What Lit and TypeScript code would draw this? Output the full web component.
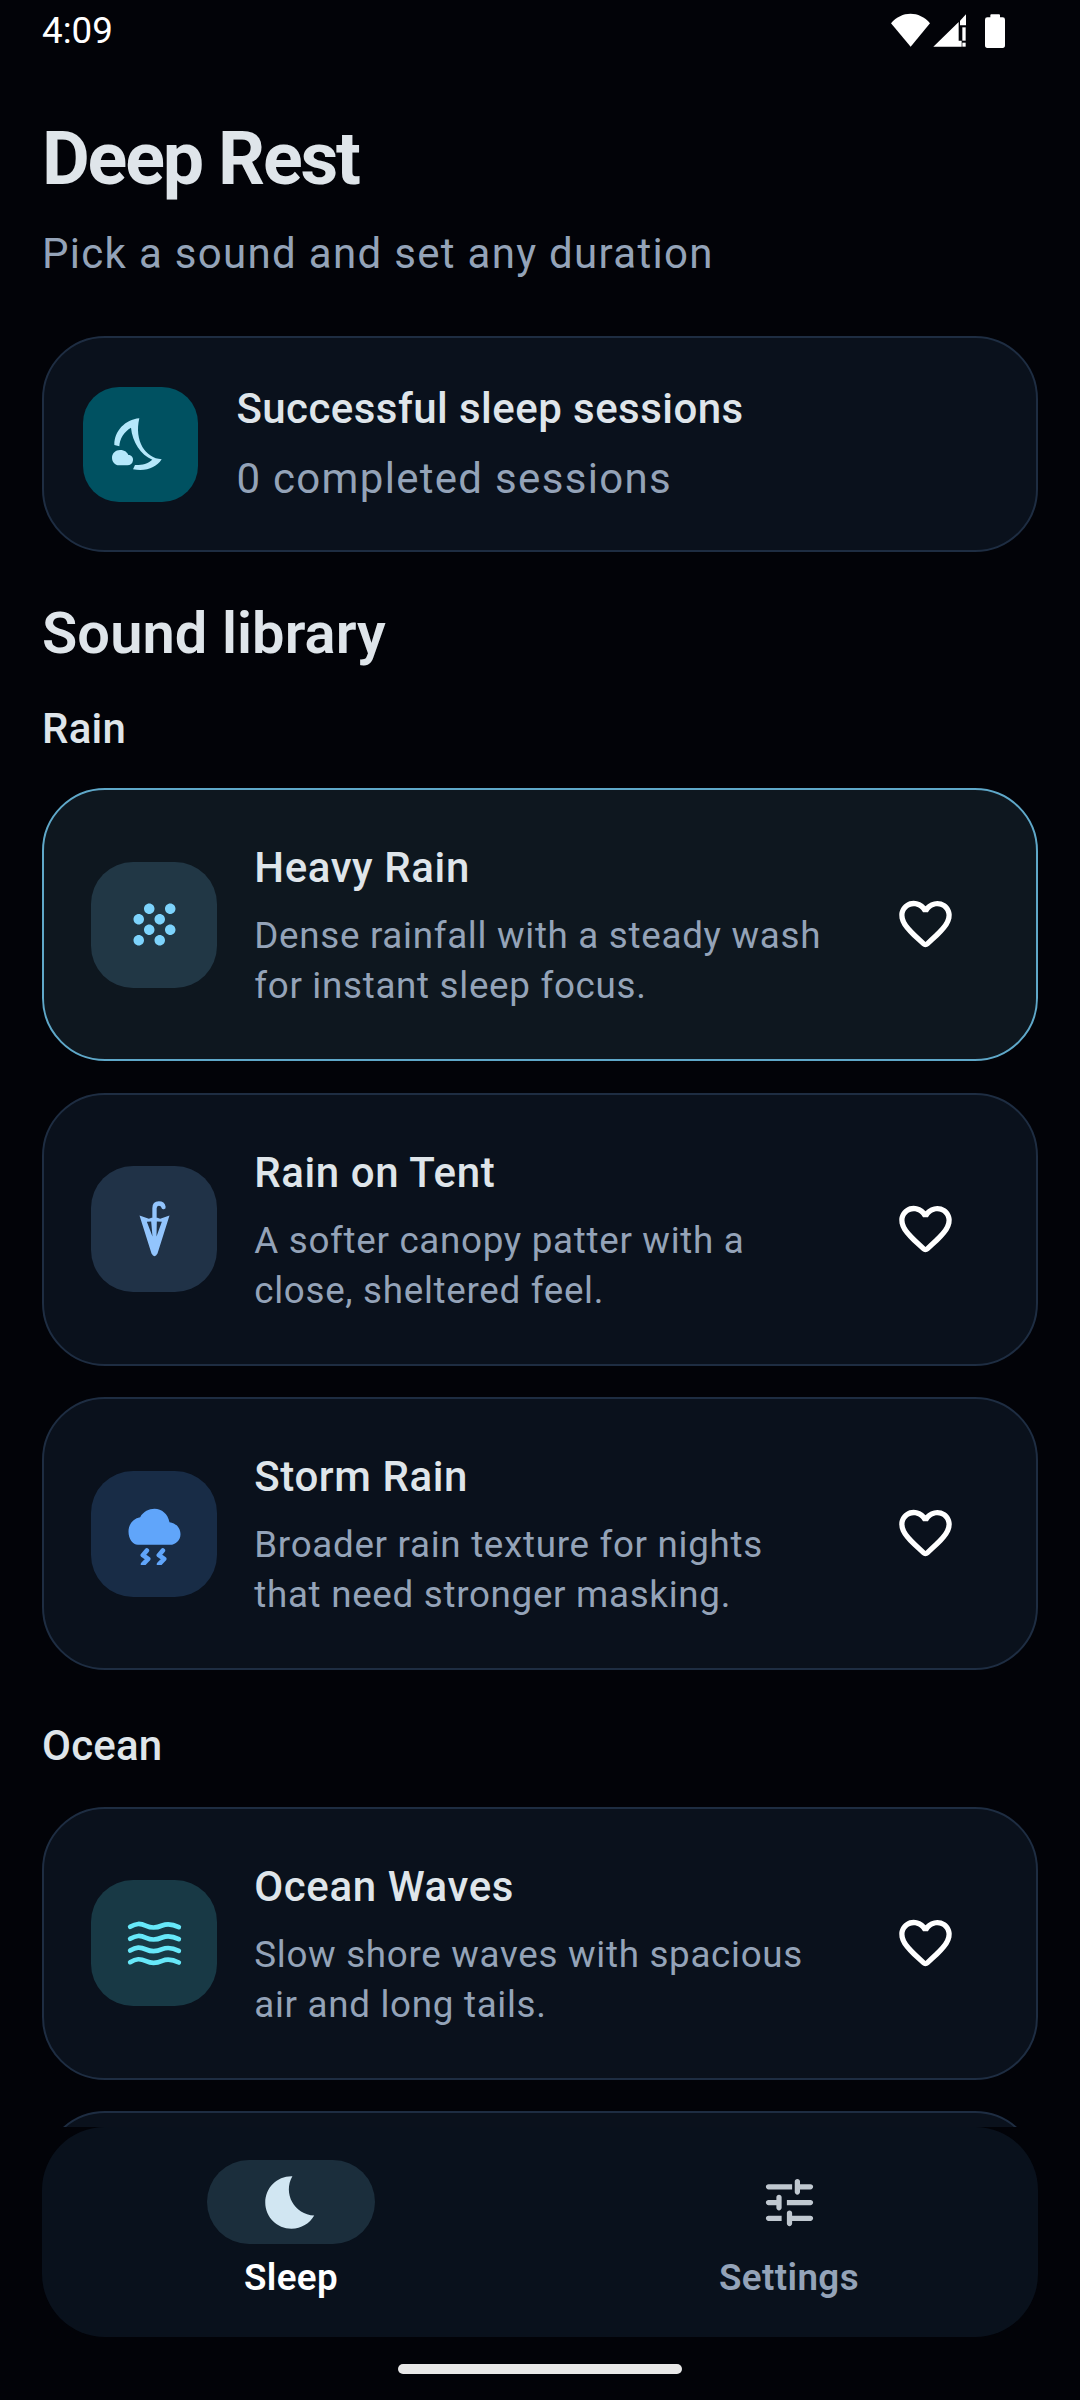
import { LitElement, html, css, svg } from "lit";
import { customElement } from "lit/decorators.js";

const grain = svg`<svg viewBox="0 0 24 24" fill="currentColor"><path d="M10 12c-1.1 0-2 .9-2 2s.9 2 2 2 2-.9 2-2-.9-2-2-2zM6 8c-1.1 0-2 .9-2 2s.9 2 2 2 2-.9 2-2-.9-2-2-2zm0 8c-1.1 0-2 .9-2 2s.9 2 2 2 2-.9 2-2-.9-2-2-2zm12-8c1.1 0 2-.9 2-2s-.9-2-2-2-2 .9-2 2 .9 2 2 2zm-4 8c-1.1 0-2 .9-2 2s.9 2 2 2 2-.9 2-2-.9-2-2-2zm4-4c-1.1 0-2 .9-2 2s.9 2 2 2 2-.9 2-2-.9-2-2-2zm-4-4c-1.1 0-2 .9-2 2s.9 2 2 2 2-.9 2-2-.9-2-2-2zm-4-4c-1.1 0-2 .9-2 2s.9 2 2 2 2-.9 2-2-.9-2-2-2z"/></svg>`;
const umbrella = svg`<svg viewBox="160.5 169.5 189 189"><path fill="currentColor" fill-rule="evenodd" d="M210 222L238 232Q255 224 272 232L300 222L264 336Q255 352 246 336ZM232 241L245 240L249 285ZM262 240L277 241L261 285Z"/><path fill="none" stroke="currentColor" stroke-width="13" stroke-linecap="round" d="M255 228V200Q255 186 268 186Q280 186 282 197"/></svg>`;
const storm = svg`<svg viewBox="160.5 151.5 189 189"><path fill="currentColor" d="M205 280C190 280 177 262 177 240C177 218 192 200 212 197C222 180 238 172 255 172C277 172 295 188 300 212C318 214 333 228 333 248C333 266 318 280 302 280Z"/><path fill="none" stroke="currentColor" stroke-width="14" stroke-linecap="round" stroke-linejoin="round" d="M232 297L220 311L236 322L221 338M280 297L268 311L284 322L269 338"/></svg>`;
const waves = svg`<svg viewBox="160.5 154.5 189 189"><g fill="none" stroke="currentColor" stroke-width="14" stroke-linecap="round"><path d="M182 199C200 188 212 188 230 196C245 203 260 203 278 195C295 188 308 190 328 200"/><path d="M182 235C200 224 212 224 230 232C245 239 260 239 278 231C295 224 308 226 328 236"/><path d="M182 270C200 259 212 259 230 267C245 274 260 274 278 266C295 259 308 261 328 271"/><path d="M182 305C200 294 212 294 230 302C245 309 260 309 278 301C295 294 308 296 328 306"/></g></svg>`;
const nightStay = svg`<svg viewBox="150 156 189 189" fill="currentColor"><path d="M241 172C198 176 166 210 166 252L181 256C182 232 196 212 216 200C220 242 245 282 280 296C266 309 245 313 228 312L222 325C262 332 292 320 308 295C260 292 225 240 241 172Z"/><path d="M183 267C198 267 205 275 208 282C218 282 223 290 222 298C221 308 214 313 205 313H180C168 313 159 302 159 290C159 277 170 267 183 267Z"/></svg>`;
const heart = svg`<svg viewBox="0 0 24 24" fill="currentColor"><path d="M19.66 3.99c-2.64-1.8-5.9-.96-7.66 1.1-1.76-2.06-5.02-2.91-7.66-1.1-1.4.96-2.28 2.58-2.34 4.29-.14 3.88 3.3 6.99 8.55 11.76l.1.09c.76.69 1.93.69 2.69-.01l.11-.1c5.25-4.76 8.68-7.87 8.55-11.75-.06-1.7-.94-3.32-2.34-4.28zM12.1 18.55l-.1.1-.1-.1C7.14 14.24 4 11.39 4 8.5 4 6.5 5.5 5 7.5 5c1.54 0 3.04.99 3.57 2.36h1.87C13.46 5.99 14.96 5 16.5 5c2 0 3.5 1.5 3.5 3.5 0 2.89-3.14 5.74-7.9 10.05z"/></svg>`;
const bedtime = svg`<svg viewBox="0 0 24 24" fill="currentColor"><path d="M12.34 2.02C6.59 1.82 2 6.42 2 12c0 5.52 4.48 10 10 10 3.71 0 6.93-2.02 8.66-5.02-7.51-.25-12.09-8.43-8.32-14.96z"/></svg>`;
const tune = svg`<svg viewBox="0 0 24 24" fill="currentColor"><path d="M3 18c0 .55.45 1 1 1h5v-2H4c-.55 0-1 .45-1 1zM3 6c0 .55.45 1 1 1h9V5H4c-.55 0-1 .45-1 1zm10 14v-1h7c.55 0 1-.45 1-1s-.45-1-1-1h-7v-1c0-.55-.45-1-1-1s-1 .45-1 1v4c0 .55.45 1 1 1s1-.45 1-1zM7 10v1H4c-.55 0-1 .45-1 1s.45 1 1 1h3v1c0 .55.45 1 1 1s1-.45 1-1v-4c0-.55-.45-1-1-1s-1 .45-1 1zm14 2c0-.55-.45-1-1-1h-9v2h9c.55 0 1-.45 1-1zm-6-3c.55 0 1-.45 1-1V7h4c.55 0 1-.45 1-1s-.45-1-1-1h-4V4c0-.55-.45-1-1-1s-1 .45-1 1v4c0 .55.45 1 1 1z"/></svg>`;
const status = svg`<svg class="sys" viewBox="0 0 660 180" fill="#fff"><path d="M93 70C125 32 178 32 210 70L152 140Z"/><path d="M220 140L296 66V122H305V140Z"/><path d="M300 62L318 43V76H300Z"/><rect x="307" y="82" width="10" height="40"/><rect x="307" y="128" width="10" height="12"/><path d="M391 52V46Q391 43 394 43H417Q420 43 420 46V52H428Q435 52 435 59V136Q435 144 428 144H382Q375 144 375 136V59Q375 52 382 52Z"/></svg>`;

type Sound = { title: string; l1: string; l2: string; icon: unknown; tone: string; active?: boolean };
const rain: Sound[] = [
  { title: "Heavy Rain", l1: "Dense rainfall with a steady wash", l2: "for instant sleep focus.", icon: grain, tone: "t-heavy", active: true },
  { title: "Rain on Tent", l1: "A softer canopy patter with a", l2: "close, sheltered feel.", icon: umbrella, tone: "t-tent" },
  { title: "Storm Rain", l1: "Broader rain texture for nights", l2: "that need stronger masking.", icon: storm, tone: "t-storm" },
];
const ocean: Sound[] = [
  { title: "Ocean Waves", l1: "Slow shore waves with spacious", l2: "air and long tails.", icon: waves, tone: "t-ocean" },
];

@customElement("app-root")
export class AppRoot extends LitElement {
  static styles = css`
    :host {
      display: flex;
      flex-direction: column;
      width: 1080px;
      height: 2400px;
      background: #020308;
      font-family: Roboto, "Liberation Sans", sans-serif;
      overflow: hidden;
    }
    .status {
      flex: none;
      height: 60px;
      display: flex;
      justify-content: space-between;
      align-items: flex-start;
      padding-left: 42px;
      color: #fff;
      font-size: 36.75px;
      line-height: 62px;
    }
    .sys { width: 220px; height: 60px; display: block; }
    main {
      flex: 1;
      min-height: 0;
      overflow: hidden;
      padding: 0 42px;
      display: flex;
      flex-direction: column;
    }
    h1 {
      margin: 56px 0 0;
      font-size: 73.5px;
      line-height: 86px;
      font-weight: 700;
      letter-spacing: -2.15px;
      color: #dfe5ea;
    }
    .sub {
      margin: 26px 0 0;
      font-size: 42px;
      line-height: 52px;
      letter-spacing: 1.31px;
      color: #94a3b8;
    }
    .summary {
      margin-top: 56px;
      box-sizing: border-box;
      height: 216px;
      flex: none;
      border: 2.6px solid #1e2d42;
      border-radius: 63px;
      background: #0a111c;
      padding: 0 39.4px;
      display: flex;
      align-items: center;
      gap: 38px;
    }
    .summary .box {
      width: 115px;
      height: 115px;
      border-radius: 36px;
      background: #005161;
      color: #b5e8fb;
    }
    .s-title {
      font-size: 42px;
      line-height: 52px;
      font-weight: 500;
      letter-spacing: 0.45px;
      color: #dfe5ea;
    }
    .s-sub {
      margin-top: 18px;
      font-size: 42px;
      line-height: 52px;
      letter-spacing: 1.31px;
      color: #94a3b8;
    }
    h2 {
      margin: 45px 0 0;
      font-size: 57.75px;
      line-height: 72px;
      font-weight: 600;
      letter-spacing: 0.1px;
      color: #dfe5ea;
    }
    h3 {
      margin: 0;
      font-size: 42px;
      line-height: 52px;
      font-weight: 500;
      letter-spacing: 0.2px;
      color: #dfe5ea;
    }
    h3.rain { margin-top: 33.5px; }
    h3.ocean { margin-top: 49.5px; }
    .list {
      display: flex;
      flex-direction: column;
      gap: 31.5px;
      margin-top: 33.5px;
      flex: none;
    }
    .ocean + .list { margin-top: 35px; }
    .card {
      box-sizing: border-box;
      height: 273px;
      flex: none;
      border: 2.6px solid #1e2d42;
      border-radius: 63px;
      background: #0a111c;
      padding: 0 47.25px;
      display: flex;
      align-items: center;
      gap: 37px;
    }
    .card.active { background: #0e171f; border-color: #5fa8c9; }
    .box {
      width: 126px;
      height: 126px;
      border-radius: 42px;
      flex: none;
      display: flex;
      align-items: center;
      justify-content: center;
    }
    .box svg { width: 63px; height: 63px; display: block; }
    .t-heavy { background: #213745; color: #7dd3fc; }
    .t-tent { background: #203247; color: #93c5fd; }
    .t-storm { background: #182c46; color: #60a5fa; }
    .t-ocean { background: #183945; color: #67e8f9; }
    .text { flex: 1; min-width: 0; padding-top: 4px; }
    .name {
      font-size: 42px;
      line-height: 52px;
      font-weight: 500;
      letter-spacing: 0.6px;
      color: #dfe5ea;
    }
    .desc {
      margin-top: 17px;
      font-size: 36.75px;
      line-height: 50px;
      letter-spacing: 0.7px;
      color: #94a3b8;
    }
    .fav {
      width: 126px;
      height: 126px;
      flex: none;
      color: #fff;
      display: flex;
      align-items: center;
      justify-content: center;
    }
    .fav svg { width: 63px; height: 63px; display: block; }
    nav {
      flex: none;
      height: 210px;
      margin: 0 42px;
      border-radius: 63px;
      background: #09111c;
      display: grid;
      grid-template-columns: 1fr 1fr;
    }
    .tab {
      display: flex;
      flex-direction: column;
      align-items: center;
      padding-top: 33px;
    }
    .pill {
      width: 168px;
      height: 84px;
      border-radius: 42px;
      display: flex;
      align-items: center;
      justify-content: center;
    }
    .tab.on .pill { background: #1b2e3c; color: #d1e6f2; }
    .tab.off .pill { color: #c0c8d0; }
    .pill svg { width: 63px; height: 63px; display: block; }
    .lbl {
      margin-top: 11px;
      font-size: 36.75px;
      line-height: 46px;
      font-weight: 600;
      letter-spacing: 0.4px;
    }
    .tab.on .lbl { color: #fff; }
    .tab.off .lbl { color: #94a3b8; }
    .home {
      flex: none;
      height: 63px;
      display: flex;
      justify-content: center;
      padding-top: 27px;
      box-sizing: border-box;
    }
    .home i {
      display: block;
      width: 284px;
      height: 10px;
      border-radius: 5px;
      background: #e8e8e8;
    }
  `;

  private row(s: Sound) {
    return html`<div class="card ${s.active ? "active" : ""}">
      <div class="box ${s.tone}">${s.icon}</div>
      <div class="text">
        <div class="name">${s.title}</div>
        <div class="desc">${s.l1}<br />${s.l2}</div>
      </div>
      <div class="fav">${heart}</div>
    </div>`;
  }

  render() {
    return html`
      <div class="status"><span>4:09</span>${status}</div>
      <main>
        <h1>Deep Rest</h1>
        <p class="sub">Pick a sound and set any duration</p>
        <section class="summary">
          <div class="box">${nightStay}</div>
          <div>
            <div class="s-title">Successful sleep sessions</div>
            <div class="s-sub">0 completed sessions</div>
          </div>
        </section>
        <h2>Sound library</h2>
        <h3 class="rain">Rain</h3>
        <div class="list">${rain.map((s) => this.row(s))}</div>
        <h3 class="ocean">Ocean</h3>
        <div class="list">
          ${ocean.map((s) => this.row(s))}
          <div class="card"></div>
        </div>
      </main>
      <nav>
        <div class="tab on"><div class="pill">${bedtime}</div><div class="lbl">Sleep</div></div>
        <div class="tab off"><div class="pill">${tune}</div><div class="lbl">Settings</div></div>
      </nav>
      <div class="home"><i></i></div>
    `;
  }
}
